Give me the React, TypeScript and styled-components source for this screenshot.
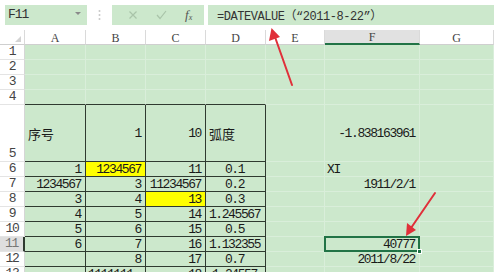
import React from "react";
import styled, { createGlobalStyle, css } from "styled-components";

const Global = createGlobalStyle`
  html, body { margin: 0; padding: 0; background: #ffffff; overflow: hidden; }
  body { width: 494px; height: 272px; }
`;

const GREEN = "#cce8cc";
const GRID = "#d9eeda";
const DARK = "#2f3a30";
const SEL = "#217346";
const MONO = `"Liberation Mono", "Noto Sans CJK SC", monospace`;

const Page = styled.div`
  position: relative;
  width: 494px;
  height: 272px;
  overflow: hidden;
  font-family: ${MONO};
  color: #222;
`;

const Toolbar = styled.div`
  display: flex;
  align-items: center;
  height: 30px;
  padding: 3px 0 4px 5px;
  box-sizing: border-box;
`;

const NameBox = styled.div`
  width: 82px;
  height: 20px;
  background: ${GREEN};
  display: flex;
  align-items: center;
  justify-content: space-between;
  padding: 0 6px 0 3px;
  box-sizing: border-box;
  font-size: 13px;
  letter-spacing: -1px;
  color: #333;
`;

const Caret = styled.span`
  width: 0;
  height: 0;
  border-left: 3px solid transparent;
  border-right: 3px solid transparent;
  border-top: 3px solid #8a8a8a;
  margin-top: -3px;
`;

const Dots = styled.div`
  width: 25px;
  display: flex;
  justify-content: center;
`;

const FxBox = styled.div`
  width: 92px;
  height: 20px;
  background: ${GREEN};
  display: flex;
  align-items: center;
  padding: 0 6px 0 16px;
  box-sizing: border-box;
  gap: 18px;
`;

const Fx = styled.span`
  font-family: "Liberation Serif", serif;
  font-style: italic;
  font-size: 13px;
  color: #555;
  sub { font-size: 8px; vertical-align: -1px; }
`;

const FormulaBox = styled.div`
  flex: 1;
  margin-left: 4px;
  height: 20px;
  background: ${GREEN};
  display: flex;
  align-items: center;
  padding-left: 9px;
  font-size: 12px;
  letter-spacing: -0.45px;
  color: #333;
`;

const Sheet = styled.div`
  display: grid;
  grid-template-columns: 25px 61px 60px 60px 60px 59px 95px 74px;
  grid-template-rows: 15px repeat(4, 15px) 57px repeat(8, 15px);
`;

const Corner = styled.div`
  background: #fff;
  border-right: 1px solid #dadada;
  border-bottom: 1px solid #cfcfcf;
  box-sizing: border-box;
  position: relative;
  &::after {
    content: "";
    position: absolute;
    right: 3px;
    bottom: 2px;
    width: 0;
    height: 0;
    border-left: 6px solid transparent;
    border-bottom: 6px solid #d3d3d3;
  }
`;

const ColHead = styled.div<{ $active?: boolean }>`
  background: ${(p) => (p.$active ? "#e1e1e1" : "#fff")};
  border-right: 1px solid #dadada;
  border-bottom: ${(p) => (p.$active ? `2px solid ${SEL}` : "1px solid #cfcfcf")};
  box-sizing: border-box;
  display: flex;
  align-items: center;
  justify-content: center;
  font-family: "Liberation Serif", serif;
  font-size: 12px;
  color: #444;
  padding-top: 2px;
`;

const RowHead = styled.div<{ $active?: boolean }>`
  background: ${(p) => (p.$active ? "#dedede" : "#fff")};
  border-bottom: 1px solid #e4e4e4;
  border-right: ${(p) => (p.$active ? `2px solid ${DARK}` : "1px solid #d6d6d6")};
  box-sizing: border-box;
  display: flex;
  align-items: flex-end;
  justify-content: center;
  font-size: 13px;
  letter-spacing: -1.2px;
  color: ${(p) => (p.$active ? "#777" : "#444")};
  line-height: 14px;
`;

type Align = "left" | "right" | "center";

const Cell = styled.div<{
  $align: Align;
  $box?: boolean;
  $topOf?: boolean;
  $yellow?: boolean;
  $selected?: boolean;
}>`
  position: relative;
  background: ${(p) => (p.$yellow ? "#ffff00" : GREEN)};
  box-sizing: border-box;
  border-right: 1px solid ${GRID};
  border-bottom: 1px solid ${GRID};
  display: flex;
  align-items: center;
  justify-content: ${(p) =>
    p.$align === "left" ? "flex-start" : p.$align === "right" ? "flex-end" : "center"};
  padding: 0 ${(p) => (p.$align === "right" ? "4px" : "2px")} 0
    ${(p) => (p.$align === "left" ? "2px" : "0")};
  font-size: 13px;
  letter-spacing: -1.4px;
  white-space: nowrap;
  overflow: visible;
  color: #1a1a1a;
  ${(p) =>
    p.$box &&
    css`
      border-right-color: ${DARK};
      border-bottom-color: ${DARK};
    `}
  ${(p) =>
    p.$topOf &&
    css`
      border-bottom-color: ${DARK};
    `}
  ${(p) =>
    p.$selected &&
    css`
      &::after {
        content: "";
        position: absolute;
        left: -1px;
        top: -1px;
        right: -1px;
        bottom: -1px;
        border: 2px solid ${SEL};
      }
      &::before {
        content: "";
        position: absolute;
        right: -3px;
        bottom: -3px;
        width: 5px;
        height: 5px;
        background: ${SEL};
        border: 1px solid #fff;
        box-sizing: border-box;
        z-index: 2;
      }
    `}
`;

const Cjk = styled.span`
  font-family: "Noto Sans CJK SC", sans-serif;
  font-size: 13px;
  letter-spacing: 0;
  margin-left: 1px;
`;

const Overlay = styled.svg`
  position: absolute;
  left: 0;
  top: 0;
  pointer-events: none;
`;

type CellData = { v: string; a?: Align; y?: boolean; sel?: boolean; cjk?: boolean };

const COLS = ["A", "B", "C", "D", "E", "F", "G"];

const r = (v: string): CellData => ({ v, a: "right" });
const c = (v: string): CellData => ({ v, a: "center" });

const DATA: Record<number, Record<string, CellData>> = {
  5: {
    A: { v: "序号", a: "left", cjk: true },
    B: r("1"),
    C: r("10"),
    D: { v: "弧度", a: "left", cjk: true },
    F: r("-1.838163961"),
  },
  6: { A: r("1"), B: { v: "1234567", a: "right", y: true }, C: r("11"), D: c("0.1"), F: { v: "XI", a: "left" } },
  7: { A: r("1234567"), B: r("3"), C: r("11234567"), D: c("0.2"), F: r("1911/2/1") },
  8: { A: r("3"), B: r("4"), C: { v: "13", a: "right", y: true }, D: c("0.3") },
  9: { A: r("4"), B: r("5"), C: r("14"), D: c("1.245567") },
  10: { A: r("5"), B: r("6"), C: r("15"), D: c("0.5") },
  11: { A: r("6"), B: r("7"), C: r("16"), D: c("1.132355"), F: { v: "40777", a: "right", sel: true } },
  12: { B: r("8"), C: r("17"), D: c("0.7"), F: r("2011/8/22") },
  13: { B: { v: "1111111", a: "left" }, C: r("18"), D: c("1.24557") },
};

const TABLE = ["A", "B", "C", "D"];

export default function App() {
  const rows = Array.from({ length: 13 }, (_, i) => i + 1);
  return (
    <Page>
      <Global />
      <Toolbar>
        <NameBox>
          <span>F11</span>
          <Caret />
        </NameBox>
        <Dots>
          <svg width="3" height="12" viewBox="0 0 3 12">
            <circle cx="1.5" cy="2" r="1" fill="#c8c8c8" />
            <circle cx="1.5" cy="6" r="1" fill="#c8c8c8" />
            <circle cx="1.5" cy="10" r="1" fill="#c8c8c8" />
          </svg>
        </Dots>
        <FxBox>
          <svg width="10" height="10" viewBox="0 0 10 10">
            <path d="M1.5 1.5 L8.5 8.5 M8.5 1.5 L1.5 8.5" stroke="#a9c4a9" strokeWidth="1.2" fill="none" />
          </svg>
          <svg width="11" height="10" viewBox="0 0 11 10">
            <path d="M1 5 L4 8.5 L10 1" stroke="#a9c4a9" strokeWidth="1.2" fill="none" />
          </svg>
          <Fx>
            f<sub>x</sub>
          </Fx>
        </FxBox>
        <FormulaBox>=DATEVALUE（“2011-8-22”）</FormulaBox>
      </Toolbar>
      <Sheet>
        <Corner />
        {COLS.map((col) => (
          <ColHead key={col} $active={col === "F"}>
            {col}
          </ColHead>
        ))}
        {rows.map((row) => (
          <React.Fragment key={row}>
            <RowHead $active={row === 11}>{row}</RowHead>
            {COLS.map((col) => {
              const d = DATA[row]?.[col];
              const inTable = TABLE.includes(col);
              return (
                <Cell
                  key={col}
                  $align={d?.a ?? "right"}
                  $box={inTable && row >= 5}
                  $topOf={inTable && row === 4}
                  $yellow={d?.y}
                  $selected={d?.sel}
                >
                  {d ? d.cjk ? <Cjk>{d.v}</Cjk> : d.v : null}
                </Cell>
              );
            })}
          </React.Fragment>
        ))}
      </Sheet>
      <Overlay width="494" height="272" viewBox="0 0 494 272">
        <g stroke="#e0303a" strokeWidth="2" strokeLinecap="round">
          <line x1="292" y1="85" x2="275" y2="37" />
          <line x1="435" y1="193" x2="411" y2="228" />
        </g>
        <g fill="#e0303a">
          <polygon points="271.5,28 269,41 280,37" />
          <polygon points="406,236 407,223 416,230" />
        </g>
      </Overlay>
    </Page>
  );
}
